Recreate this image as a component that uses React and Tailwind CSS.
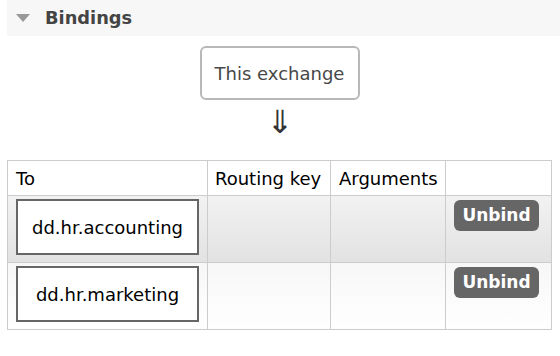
import React from "react";

const rows = ["dd.hr.accounting", "dd.hr.marketing"];

export default function App() {
  return (
    <div
      className="w-[560px] h-[356px] bg-white text-[#484848]"
      style={{ fontFamily: '"DejaVu Sans", Verdana, sans-serif' }}
    >
      {/* SECTION HEADER */}
      <div className="ml-[7px] h-[36px] bg-[#f7f7f7] flex items-center">
        <svg width="14" height="8" viewBox="0 0 14 8" className="ml-[9px] mr-[15px]">
          <polygon points="0,0 14,0 7,8" fill="#999" />
        </svg>
        <h2 className="text-[17.8px] font-bold text-[#444]">Bindings</h2>
      </div>

      {/* EXCHANGE + ARROW */}
      <div className="flex flex-col items-center pt-[10px]">
        <div className="w-[160px] h-[54px] border-2 border-[#b8b8b8] rounded-[6px] flex items-center justify-center text-[18px] text-[#484848] ml-[-1px]">
          This exchange
        </div>
        <div className="text-[32px] leading-[36px] mt-[4px] text-[#333]">⇓</div>
      </div>

      {/* TABLE */}
      <table className="ml-[7px] mt-[20px] w-[545px] table-fixed border-collapse text-[18px] text-black whitespace-nowrap">
        <thead>
          <tr className="h-[35px]">
            <th className="w-[200px] border border-[#ccc] text-left font-normal px-[8px]">To</th>
            <th className="w-[123px] border border-[#ccc] text-left font-normal px-[7px]">Routing key</th>
            <th className="w-[115px] border border-[#ccc] text-left font-normal px-[8px]">Arguments</th>
            <th className="border border-[#ccc]"></th>
          </tr>
        </thead>
        <tbody>
          {rows.map((name, i) => (
            <tr
              key={name}
              className={`h-[67px] ${
                i === 0
                  ? "bg-gradient-to-b from-[#f2f2f2] to-[#e2e2e2]"
                  : "bg-gradient-to-b from-[#f7f7f7] to-white"
              }`}
            >
              <td className="border border-[#ccc] align-top pt-[3px] px-[8px]">
                <div className="w-[183px] h-[56px] bg-white border-2 border-[#666] flex items-center justify-center">
                  {name}
                </div>
              </td>
              <td className="border border-[#ccc]"></td>
              <td className="border border-[#ccc]"></td>
              <td className="border border-[#ccc] align-top pt-[4px] px-[8px]">
                <button className="w-[85px] h-[31px] bg-[#666] rounded-[6px] text-white font-bold text-[17px]">
                  Unbind
                </button>
              </td>
            </tr>
          ))}
        </tbody>
      </table>
    </div>
  );
}
